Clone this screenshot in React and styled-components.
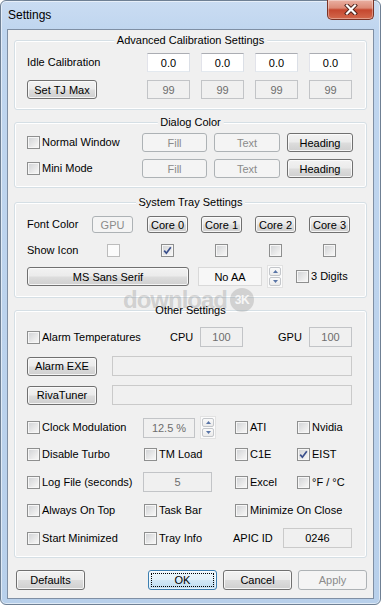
import React from 'react';
import styled, { createGlobalStyle, css } from 'styled-components';

const GlobalStyle = createGlobalStyle`
  html, body {
    margin: 0;
    padding: 0;
    background: #ffffff;
  }
  body {
    font-family: "Liberation Sans", Arial, sans-serif;
    font-size: 11px;
    color: #000;
  }
  * {
    box-sizing: border-box;
  }
`;

const Window = styled.div`
  width: 381px;
  height: 605px;
  display: flex;
  flex-direction: column;
  padding: 0 6px 5px;
  border: 1px solid #6f8094;
  border-radius: 6px;
  background: linear-gradient(180deg, #cadcf2 0%, #c0d6ef 28px, #b8d0eb 100%);
  box-shadow: inset 0 0 0 1px rgba(255, 255, 255, 0.55);
`;

const TitleBar = styled.div`
  height: 28px;
  flex: none;
  display: flex;
  justify-content: space-between;
  align-items: flex-start;
`;

const Title = styled.div`
  padding-left: 1px;
  line-height: 28px;
  font-size: 12px;
  color: #000;
`;

const CloseButton = styled.div`
  width: 47px;
  height: 20px;
  margin-top: -1px;
  display: flex;
  align-items: center;
  justify-content: center;
  border: 1px solid #7a3326;
  border-top: none;
  border-radius: 0 0 5px 5px;
  background: linear-gradient(180deg, #eab0a2 0%, #dc8a76 42%, #c5472f 52%, #d3694d 100%);
  box-shadow: inset 0 0 0 1px rgba(255, 255, 255, 0.35);
`;

const Client = styled.div`
  position: relative;
  flex: 1;
  display: flex;
  flex-direction: column;
  padding: 10px 6px 8px;
  border: 1px solid #7f8fa4;
  background: #f0f0f0;
`;

const Group = styled.div`
  position: relative;
  flex: none;
  margin-top: ${p => p.$mt || 0}px;
  padding: ${p => p.$pt}px 12px ${p => p.$pb}px;
  border: 1px solid #d5dfe5;
  border-radius: 3px;
  box-shadow: inset 0 0 0 1px #ffffff;
`;

const GroupTitle = styled.span`
  position: absolute;
  top: -7px;
  left: 50%;
  transform: translateX(-50%);
  padding: 0 3px;
  line-height: 13px;
  white-space: nowrap;
  background: ${p => (p.$clear ? 'transparent' : '#f0f0f0')};
  z-index: 2;
`;

const CalibGrid = styled.div`
  display: grid;
  grid-template-columns: 109px repeat(4, 43px);
  column-gap: 11px;
  grid-auto-rows: 19px;
  row-gap: 8px;
  align-items: center;
`;

const ColorGrid = styled.div`
  display: grid;
  grid-template-columns: 108px 65px 66px 66px;
  column-gap: 7px;
  grid-auto-rows: 19px;
  row-gap: 7px;
  align-items: center;
`;

const TrayGrid = styled.div`
  display: grid;
  grid-template-columns: 52px 42px 41px 41px 41px 41px;
  column-gap: 13px;
  grid-template-rows: 17px 13px;
  row-gap: 11px;
  align-items: center;
  & > span[data-center] {
    justify-self: center;
  }
`;

const Row = styled.div`
  display: grid;
  grid-template-columns: ${p => p.$cols};
  align-items: center;
  height: ${p => p.$h || 20}px;
  margin-top: ${p => p.$mt || 0}px;
`;

const Cell = styled.div`
  display: flex;
  align-items: center;
  gap: ${p => p.$gap || 0}px;
`;

const Text = styled.span`
  white-space: nowrap;
  line-height: 13px;
`;

const Button = styled.button`
  position: relative;
  width: ${p => (p.$w ? `${p.$w}px` : '100%')};
  height: ${p => p.$h || 19}px;
  padding: 0;
  display: inline-flex;
  align-items: center;
  justify-content: center;
  font-family: inherit;
  font-size: 11px;
  color: #000;
  white-space: nowrap;
  border: 1px solid #707070;
  border-radius: 3px;
  background: linear-gradient(180deg, #f2f2f2 0%, #ebebeb 48%, #dddddd 52%, #cfcfcf 100%);
  box-shadow: inset 0 0 0 1px rgba(252, 252, 252, 0.85);

  ${p => p.$off && css`
    color: #8b8b8b;
    border-color: #adb2b5;
    background: #f4f4f4;
    box-shadow: none;
  `}

  ${p => p.$default && css`
    border-color: #3c7fb1;
    background: linear-gradient(180deg, #eef7fc 0%, #e3f1fa 48%, #d2e8f6 52%, #bfdcf0 100%);
    box-shadow: inset 0 0 0 1px rgba(255, 255, 255, 0.6);
    &::after {
      content: '';
      position: absolute;
      inset: 2px;
      border: 1px dotted #000;
    }
  `}
`;

const tones = {
  edit: css`
    background: #ffffff;
    border-color: #abadb3 #dbdfe6 #e3e9ef #e2e3ea;
    color: #000;
  `,
  ro: css`
    background: #f0f0f0;
    border-color: #c2c4c7;
    color: #6d6d6d;
  `,
  plain: css`
    background: #f0f0f0;
    border-color: #cacaca;
    color: #000;
  `,
  light: css`
    background: #f7f7f7;
    border-color: #d9d9d9;
    color: #000;
  `,
};

const Field = styled.div`
  width: ${p => p.$w}px;
  height: ${p => p.$h || 19}px;
  display: flex;
  align-items: center;
  justify-content: center;
  border: 1px solid;
  white-space: nowrap;
  ${p => tones[p.$tone || 'edit']}
`;

const Box = styled.span`
  flex: none;
  width: 13px;
  height: 13px;
  display: inline-flex;
  align-items: center;
  justify-content: center;
  border: 1px solid #8e8f8f;
  background: linear-gradient(135deg, #cfd1d4 0%, #eeeeee 70%, #f9f9f9 100%);
  box-shadow: inset 0 0 0 1px #f6f6f6;

  ${p => p.$off && css`
    border-color: #bcbcbc;
    background: #fbfbfb;
    box-shadow: none;
  `}
`;

const CheckLabel = styled.label`
  display: inline-flex;
  align-items: center;
  gap: 2px;
  white-space: nowrap;
  line-height: 13px;
`;

const SpinFrame = styled.div`
  width: 16px;
  height: 23px;
  display: flex;
  flex-direction: column;
  gap: 1px;
  padding: 1px;
  border: 1px solid #e2e2e2;
  background: #fbfbfb;
`;

const SpinPart = styled.div`
  flex: 1;
  display: flex;
  align-items: center;
  justify-content: center;
  border: 1px solid #c3c6ca;
  border-radius: 2px;
  background: linear-gradient(180deg, #fafafa 0%, #ebebeb 100%);
`;

const Footer = styled.div`
  display: flex;
  justify-content: space-between;
  align-items: center;
  height: 20px;
  margin-top: 12px;
  padding-left: 2px;
`;

const FooterRight = styled.div`
  display: flex;
  gap: 6px;
`;

const Watermark = styled.div`
  position: absolute;
  left: 115px;
  top: 258px;
  display: flex;
  align-items: center;
  gap: 3px;
  pointer-events: none;
  color: rgba(130, 130, 130, 0.3);
  font-size: 24px;
  line-height: 24px;
  font-weight: bold;
  letter-spacing: -1px;
  z-index: 1;
`;

const WatermarkBadge = styled.span`
  width: 24px;
  height: 24px;
  border-radius: 50%;
  display: inline-flex;
  align-items: center;
  justify-content: center;
  background: rgba(130, 130, 130, 0.28);
  color: #f6f6f6;
  font-size: 12px;
  line-height: 12px;
  letter-spacing: -0.5px;
`;

const CheckBox = ({ checked, off, ...rest }) => (
  <Box $off={off} {...rest}>
    {checked && (
      <svg width="9" height="9" viewBox="0 0 9 9">
        <path d="M1.2 4.6 L3.4 7.2 L7.8 1.2" fill="none" stroke="#3a4f8c" strokeWidth="1.7" />
      </svg>
    )}
  </Box>
);

const Check = ({ children, checked }) => (
  <CheckLabel>
    <CheckBox checked={checked} />
    {children}
  </CheckLabel>
);

const Arrow = ({ down }) => (
  <svg width="5" height="3" viewBox="0 0 5 3">
    <polygon points={down ? '0,0 5,0 2.5,3' : '0,3 5,3 2.5,0'} fill="#5874a6" />
  </svg>
);

const Spin = () => (
  <SpinFrame>
    <SpinPart><Arrow /></SpinPart>
    <SpinPart><Arrow down /></SpinPart>
  </SpinFrame>
);

export default function App() {
  return (
    <>
      <GlobalStyle />
      <Window>
        <TitleBar>
          <Title>Settings</Title>
          <CloseButton>
            <svg width="14" height="11" viewBox="0 0 14 11">
              <path d="M3 1.5 L11 9.5 M11 1.5 L3 9.5" stroke="#4a1f17" strokeWidth="4" strokeLinecap="square" />
              <path d="M3 1.5 L11 9.5 M11 1.5 L3 9.5" stroke="#ffffff" strokeWidth="2.2" strokeLinecap="square" />
            </svg>
          </CloseButton>
        </TitleBar>

        <Client>
          <Group $pt={12} $pb={10}>
            <GroupTitle>Advanced Calibration Settings</GroupTitle>
            <CalibGrid>
              <Text>Idle Calibration</Text>
              <Field $w={43}>0.0</Field>
              <Field $w={43}>0.0</Field>
              <Field $w={43}>0.0</Field>
              <Field $w={43}>0.0</Field>
              <Button $w={70}>Set TJ Max</Button>
              <Field $w={43} $tone="ro">99</Field>
              <Field $w={43} $tone="ro">99</Field>
              <Field $w={43} $tone="ro">99</Field>
              <Field $w={43} $tone="ro">99</Field>
            </CalibGrid>
          </Group>

          <Group $mt={12} $pt={10} $pb={9}>
            <GroupTitle>Dialog Color</GroupTitle>
            <ColorGrid>
              <Check>Normal Window</Check>
              <Button $off>Fill</Button>
              <Button $off>Text</Button>
              <Button>Heading</Button>
              <Check>Mini Mode</Check>
              <Button $off>Fill</Button>
              <Button $off>Text</Button>
              <Button>Heading</Button>
            </ColorGrid>
          </Group>

          <Group $mt={14} $pt={13} $pb={9}>
            <GroupTitle>System Tray Settings</GroupTitle>
            <TrayGrid>
              <Text>Font Color</Text>
              <Button $w={41} $h={17} $off>GPU</Button>
              <Button $w={41} $h={17}>Core 0</Button>
              <Button $w={41} $h={17}>Core 1</Button>
              <Button $w={41} $h={17}>Core 2</Button>
              <Button $w={41} $h={17}>Core 3</Button>
              <Text>Show Icon</Text>
              <CheckBox data-center off />
              <CheckBox data-center checked />
              <CheckBox data-center />
              <CheckBox data-center />
              <CheckBox data-center />
            </TrayGrid>
            <Row $cols="171px 69px 29px 1fr" $h={23} $mt={8}>
              <Button $w={162}>MS Sans Serif</Button>
              <Field $w={64} $tone="light">No AA</Field>
              <Spin />
              <Check>3 Digits</Check>
            </Row>
          </Group>

          <Group $mt={12} $pt={16} $pb={9}>
            <GroupTitle $clear>Other Settings</GroupTitle>
            <Row $cols="143px 30px 78px 31px 43px">
              <Check>Alarm Temperatures</Check>
              <Text>CPU</Text>
              <Field $w={43} $h={20} $tone="ro">100</Field>
              <Text>GPU</Text>
              <Field $w={43} $h={20} $tone="ro">100</Field>
            </Row>
            <Row $cols="85px 240px" $mt={9}>
              <Button $w={70}>Alarm EXE</Button>
              <Field $w={240} $h={20} $tone="plain" />
            </Row>
            <Row $cols="85px 240px" $mt={9}>
              <Button $w={70}>RivaTuner</Button>
              <Field $w={240} $h={20} $tone="plain" />
            </Row>
            <Row $cols="116px 92px 62px 1fr" $mt={11}>
              <Check>Clock Modulation</Check>
              <Cell $gap={5}>
                <Field $w={52} $h={20} $tone="ro">12.5 %</Field>
                <Spin />
              </Cell>
              <Check>ATI</Check>
              <Check>Nvidia</Check>
            </Row>
            <Row $cols="117px 91px 62px 1fr" $mt={8}>
              <Check>Disable Turbo</Check>
              <Check>TM Load</Check>
              <Check>C1E</Check>
              <Check checked>EIST</Check>
            </Row>
            <Row $cols="116px 92px 62px 1fr" $mt={8}>
              <Check>Log File (seconds)</Check>
              <Field $w={69} $h={20} $tone="ro">5</Field>
              <Check>Excel</Check>
              <Check>°F / °C</Check>
            </Row>
            <Row $cols="117px 91px 1fr" $mt={8}>
              <Check>Always On Top</Check>
              <Check>Task Bar</Check>
              <Check>Minimize On Close</Check>
            </Row>
            <Row $cols="117px 89px 50px 69px" $mt={8}>
              <Check>Start Minimized</Check>
              <Check>Tray Info</Check>
              <Text>APIC ID</Text>
              <Field $w={69} $h={20} $tone="plain">0246</Field>
            </Row>
          </Group>

          <Footer>
            <Button $w={69} $h={20}>Defaults</Button>
            <FooterRight>
              <Button $w={69} $h={20} $default>OK</Button>
              <Button $w={69} $h={20}>Cancel</Button>
              <Button $w={69} $h={20} $off>Apply</Button>
            </FooterRight>
          </Footer>

          <Watermark>
            <span>download</span>
            <WatermarkBadge>3K</WatermarkBadge>
          </Watermark>
        </Client>
      </Window>
    </>
  );
}
